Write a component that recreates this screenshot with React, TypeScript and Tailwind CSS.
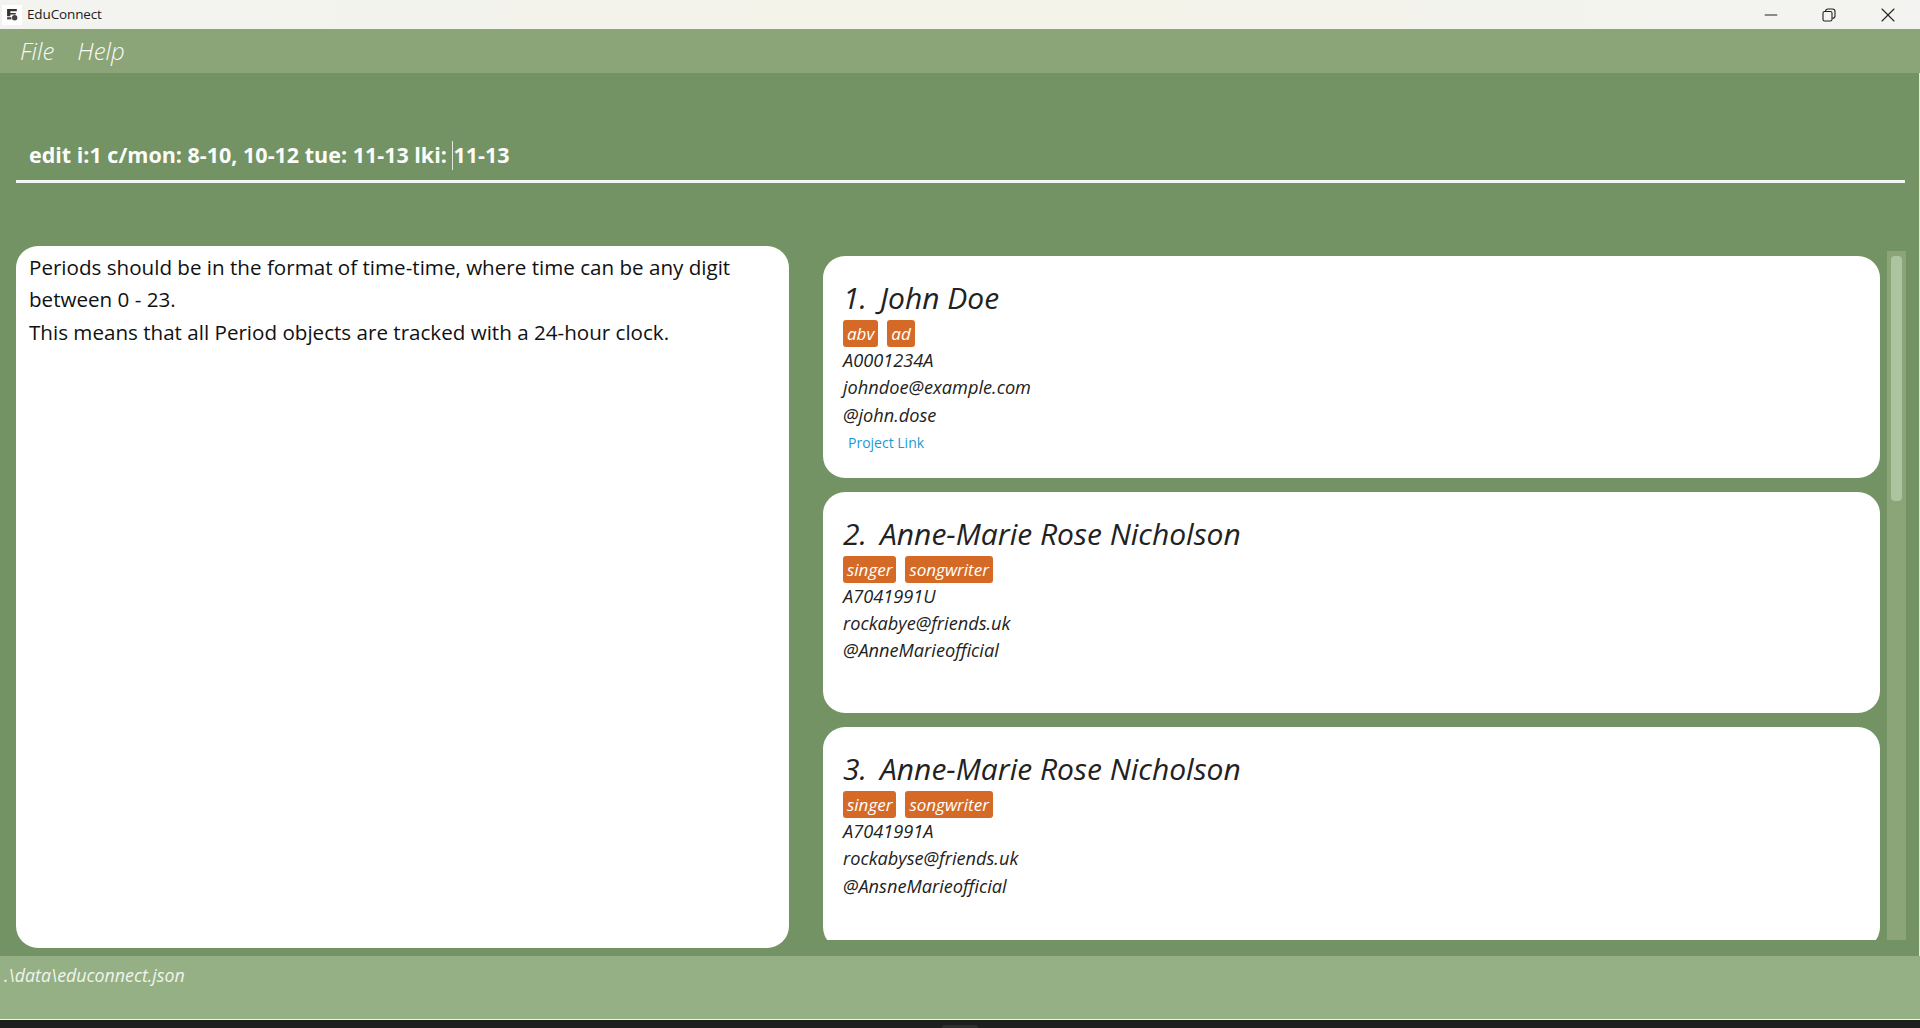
import React from 'react';
import { Minus, X } from 'lucide-react';

const FONT = "font-['Open_Sans','Noto_Sans',sans-serif]";

type Person = {
  index: number;
  name: string;
  tags: string[];
  id: string;
  email: string;
  telegram: string;
  link?: string;
};

const people: Person[] = [
  { index: 1, name: 'John Doe', tags: ['abv', 'ad'], id: 'A0001234A', email: 'johndoe@example.com', telegram: '@john.dose', link: 'Project Link' },
  { index: 2, name: 'Anne-Marie Rose Nicholson', tags: ['singer', 'songwriter'], id: 'A7041991U', email: 'rockabye@friends.uk', telegram: '@AnneMarieofficial' },
  { index: 3, name: 'Anne-Marie Rose Nicholson', tags: ['singer', 'songwriter'], id: 'A7041991A', email: 'rockabyse@friends.uk', telegram: '@AnsneMarieofficial' },
];

const TitleBar = () => (
  <div className="flex h-[29px] shrink-0 items-center bg-linear-to-r from-[#f3f3f1] via-[#f3f3e9] to-[#f3f3f1] pl-[2px]">
    <div className="flex h-5 w-5 items-center justify-center bg-white">
      <svg width="13" height="13" viewBox="0 0 12 12">
        <path d="M1 1h9v2H4v1.5h5V6H4v1.5H1z" fill="#333" />
        <circle cx="8" cy="9" r="2.5" fill="#444" />
        <rect x="1" y="8.5" width="4" height="2" fill="#444" />
      </svg>
    </div>
    <span className="ml-[5px] text-[13.5px] tracking-[-0.01em] text-[#1c1c1c]">EduConnect</span>
    <div className="ml-auto flex items-center pr-[20px] text-[#222]">
      <Minus size={20} strokeWidth={1.2} />
      <svg className="ml-[41px]" width="14" height="14" viewBox="0 0 14 14" fill="none" stroke="#222" strokeWidth="1.1">
        <rect x="1" y="3.5" width="9" height="9.5" rx="1.6" />
        <path d="M3.5 3.2C3.7 1.8 4.5 1 6 1h4.5C12 1 13 2 13 3.5V8c0 1.4-.8 2.2-2.6 2.4" />
      </svg>
      <X className="ml-[40px]" size={24} strokeWidth={1.1} />
    </div>
  </div>
);

const MenuBar = () => (
  <div className="flex h-[44px] shrink-0 items-center gap-[23px] bg-[#8ba578] pl-[20px] text-[24px] font-light italic text-[#f8faf6]">
    <span>File</span>
    <span>Help</span>
  </div>
);

const CommandBox = () => (
  <div className="mt-[66px] mr-[14px] ml-[16px] h-[44px] shrink-0 border-b-[3px] border-[#f4f6f2] pl-[13px]">
    <div className="flex h-8 items-center text-[21.5px] font-bold leading-8 text-[#fbfcfa]">
      <span className="whitespace-pre">edit i:1 c/mon: 8-10, 10-12 tue: 11-13 lki: </span>
      <span className="h-[29px] w-px bg-[#dfe6da]" />
      <span>11-13</span>
    </div>
  </div>
);

const ResultPanel = () => (
  <div className="h-[702px] w-[773px] shrink-0 rounded-[22px] bg-white pt-[5px] pr-[16px] pl-[13px] text-[20.6px] leading-[32.4px] text-[#111]">
    Periods should be in the format of time-time, where time can be any digit between 0 - 23.
    <br />
    This means that all Period objects are tracked with a 24-hour clock.
  </div>
);

const PersonCard = ({ person }: { person: Person }) => (
  <div className="h-[221.5px] shrink-0 rounded-[22px] bg-white pt-[24px] pl-[20px] italic text-[#222]">
    <div className="flex h-[35px] items-center text-[30px] leading-[35px]">
      <span className="w-[37px]">{person.index}.</span>
      <span>{person.name}</span>
    </div>
    <div className="mt-[5px] flex h-[27px] gap-[9px]">
      {person.tags.map(tag => (
        <span key={tag} className="rounded-[3px] bg-[#d56a27] px-[4px] text-[17px] leading-[27px] text-white">
          {tag}
        </span>
      ))}
    </div>
    <div className="text-[18.2px] leading-[27.4px]">
      <p>{person.id}</p>
      <p>{person.email}</p>
      <p>{person.telegram}</p>
    </div>
    {person.link && <p className="pl-[5px] text-[14px] not-italic leading-[27.4px] text-[#1b9ad2]">{person.link}</p>}
  </div>
);

const PersonList = () => (
  <div className="h-[689px] min-w-0 flex-1 overflow-hidden pt-[5px] pl-[34px]">
    <div className="flex flex-col gap-[14px]">
      {people.map(person => (
        <PersonCard key={person.index} person={person} />
      ))}
    </div>
  </div>
);

const Scrollbar = () => (
  <div className="ml-[7px] h-[689px] w-[19px] shrink-0 bg-[#8ba578] px-[4px] pt-[5px]">
    <div className="h-[245px] rounded-[4px] bg-[#aec4a0]" />
  </div>
);

const App = () => {
  return (
    <div className={`${FONT} flex h-[1028px] w-[1920px] flex-col overflow-hidden`}>
      <TitleBar />
      <MenuBar />
      <main className="flex flex-1 flex-col border-r border-[#e6ebe2] bg-[#739365]">
        <CommandBox />
        <div className="mt-[63px] flex pr-[13px] pl-[16px]">
          <ResultPanel />
          <div className="mt-[5px] flex min-w-0 flex-1 items-start">
            <PersonList />
            <Scrollbar />
          </div>
        </div>
      </main>
      <footer className="h-[64px] shrink-0 border-b border-[#f1f4ee] bg-[#95b085] pt-[6px] pl-[4px] text-[17.8px] italic leading-[26px] text-[#f0f4ed]">
        {'.\\data\\educonnect.json'}
      </footer>
      <div className="flex h-[8px] shrink-0 items-end justify-center bg-[#1d1f1f]">
        <div className="h-[3px] w-[36px] rounded-t-[3px] bg-[#2e302f]" />
      </div>
    </div>
  );
};

export default App;
